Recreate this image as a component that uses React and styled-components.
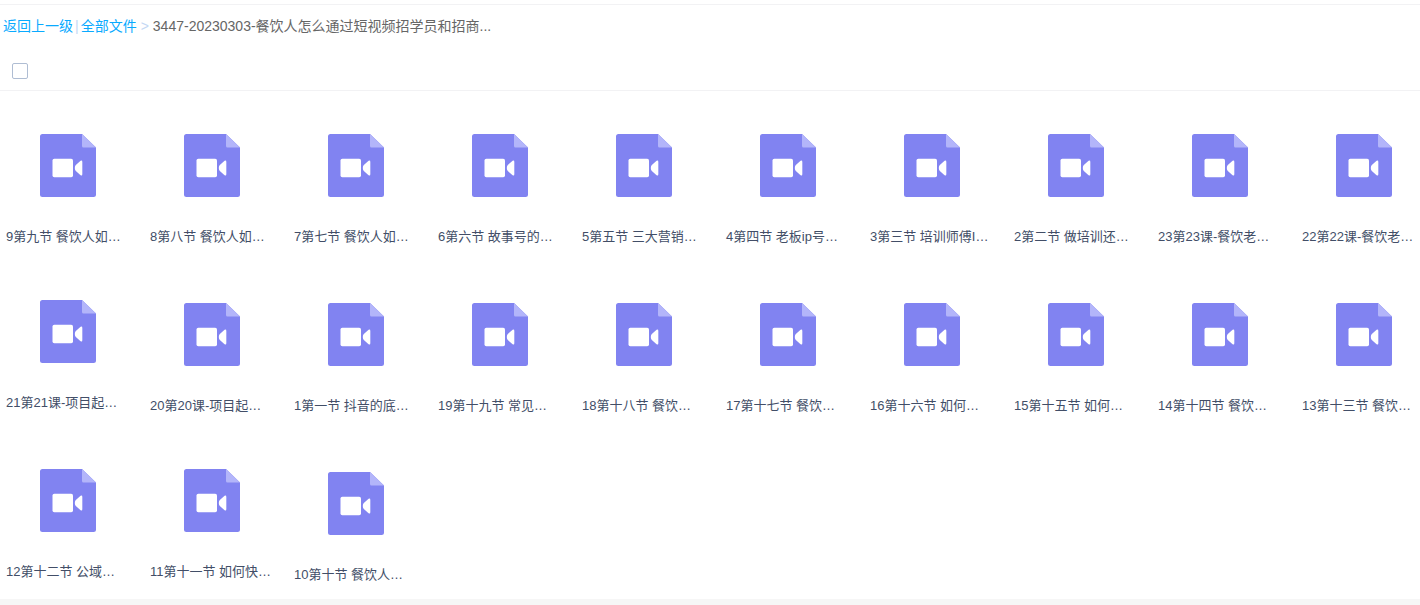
import React from "react";
import styled, { createGlobalStyle } from "styled-components";

const GlobalStyle = createGlobalStyle`
  * { box-sizing: border-box; }
  body {
    margin: 0;
    background: #fff;
    color: #424e67;
    font-family: "Liberation Sans", "Noto Sans CJK SC", sans-serif;
    overflow-x: hidden;
  }
`;

const Page = styled.div`
  padding-top: 4px;
`;

const Breadcrumb = styled.nav`
  display: flex;
  align-items: center;
  height: 46px;
  padding: 0 3px 4px;
  border-top: 1px solid #f2f2f4;
  font-size: 14px;
  line-height: 20px;
  white-space: nowrap;
`;

const CrumbLink = styled.a`
  color: #09aaff;
  text-decoration: none;
`;

const Divider = styled.span`
  padding: 0 2px;
  color: #c4d8f4;
`;

const Arrow = styled.span`
  padding: 0 4px;
  color: #c4d8f4;
`;

const Current = styled.span`
  color: #666;
`;

const SelectBar = styled.div`
  display: flex;
  align-items: center;
  height: 41px;
  padding: 2px 12px 0;
  border-bottom: 1px solid #f2f2f4;
`;

const CheckBox = styled.input`
  appearance: none;
  width: 16px;
  height: 16px;
  margin: 0;
  border: 1px solid #afbdd3;
  border-radius: 2px;
  background: #fff;

  &:checked {
    background: #09aaff;
  }
`;

const FileList = styled.ul`
  display: grid;
  grid-template-columns: repeat(auto-fill, 136px);
  gap: 46px 8px;
  margin: 0 -20px 0 0;
  padding: 43px 0 4px;
  list-style: none;
`;

const Tile = styled.li`
  display: flex;
  flex-direction: column;
  align-items: center;
  gap: 30px;
  height: 123px;
  margin-top: ${(p) => (p.$raised ? -3 : 0)}px;
`;

const FileName = styled.a`
  align-self: stretch;
  padding-left: 6px;
  color: #424e67;
  font-size: 13px;
  line-height: 20px;
  text-decoration: none;
  white-space: nowrap;
`;

const Icon = styled.svg`
  flex: none;
  width: 56px;
  height: 63px;
`;

const Footer = styled.footer`
  height: 6px;
  background: #f6f6f6;
`;

const files = [
  { name: "9第九节 餐饮人如…" },
  { name: "8第八节 餐饮人如…" },
  { name: "7第七节 餐饮人如…" },
  { name: "6第六节 故事号的…" },
  { name: "5第五节 三大营销…" },
  { name: "4第四节 老板ip号…" },
  { name: "3第三节 培训师傅I…" },
  { name: "2第二节 做培训还…" },
  { name: "23第23课-餐饮老…" },
  { name: "22第22课-餐饮老…" },
  { name: "21第21课-项目起…", raised: true },
  { name: "20第20课-项目起…" },
  { name: "1第一节 抖音的底…" },
  { name: "19第十九节 常见…" },
  { name: "18第十八节 餐饮…" },
  { name: "17第十七节 餐饮…" },
  { name: "16第十六节 如何…" },
  { name: "15第十五节 如何…" },
  { name: "14第十四节 餐饮…" },
  { name: "13第十三节 餐饮…" },
  { name: "12第十二节 公域…", raised: true },
  { name: "11第十一节 如何快…", raised: true },
  { name: "10第十节 餐饮人…" },
];

function VideoFileIcon() {
  return (
    <Icon viewBox="0 0 56 63" aria-hidden="true">
      <path
        d="M2.5 0H42l14 13.5v47a2.5 2.5 0 0 1-2.5 2.5h-51A2.5 2.5 0 0 1 0 60.5v-58A2.5 2.5 0 0 1 2.5 0Z"
        fill="#8183f1"
      />
      <path d="M42 0l14 13.5H43.5A1.5 1.5 0 0 1 42 12Z" fill="#b3b5fa" />
      <rect x="12.5" y="24.8" width="20.5" height="18.4" rx="1.8" fill="#fff" />
      <path
        d="M35.8 31l4.8-4.2q1.7-1 1.7 1v12.4q0 2-1.7 1L35.8 37q-1-1-1-3t1-3Z"
        fill="#fff"
      />
    </Icon>
  );
}

export default function App() {
  return (
    <Page>
      <GlobalStyle />
      <Breadcrumb aria-label="文件路径">
        <CrumbLink href="#up">返回上一级</CrumbLink>
        <Divider>|</Divider>
        <CrumbLink href="#all">全部文件</CrumbLink>
        <Arrow>&gt;</Arrow>
        <Current>3447-20230303-餐饮人怎么通过短视频招学员和招商...</Current>
      </Breadcrumb>
      <SelectBar>
        <CheckBox type="checkbox" aria-label="全选" />
      </SelectBar>
      <main>
        <FileList>
          {files.map((file) => (
            <Tile key={file.name} $raised={file.raised}>
              <VideoFileIcon />
              <FileName href="#file">{file.name}</FileName>
            </Tile>
          ))}
        </FileList>
      </main>
      <Footer />
    </Page>
  );
}
